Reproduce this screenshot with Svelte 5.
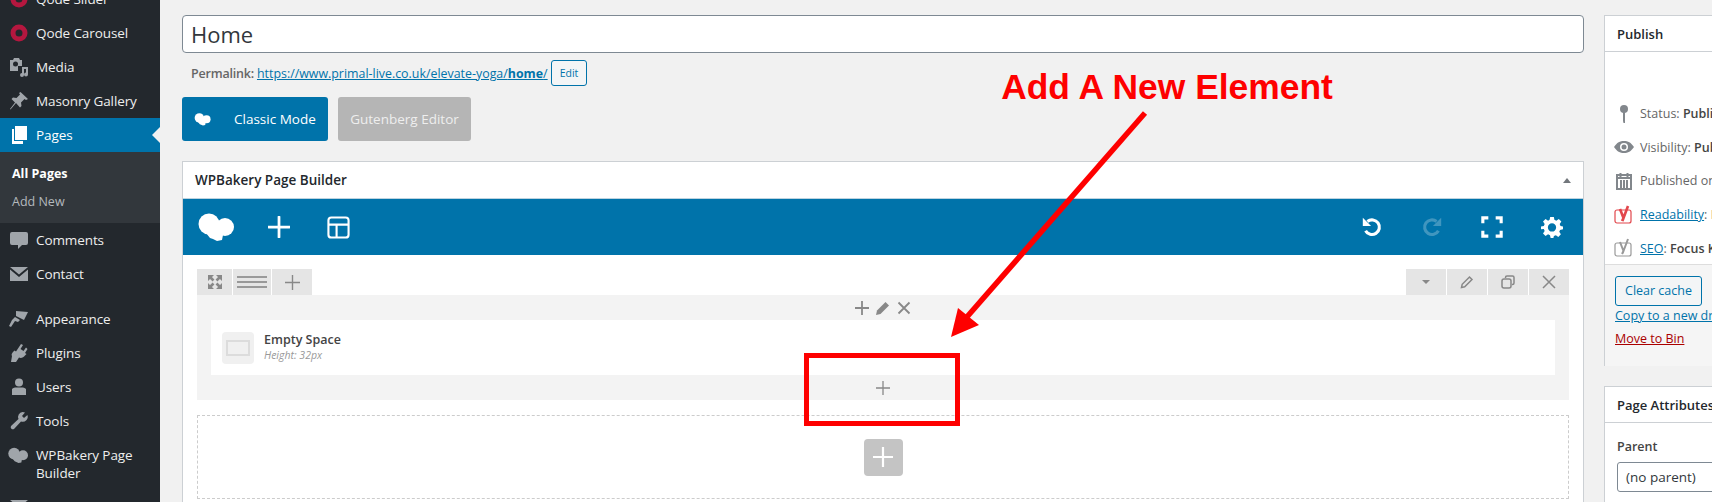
<script>
  const menuA = [
    { label: 'Qode Slider', icon: 'qode' },
    { label: 'Qode Carousel', icon: 'qode' },
    { label: 'Media', icon: 'media' },
    { label: 'Masonry Gallery', icon: 'pin' }
  ];
  const menuB = [
    { label: 'Comments', icon: 'comment' },
    { label: 'Contact', icon: 'mail', gap: true },
    { label: 'Appearance', icon: 'brush' },
    { label: 'Plugins', icon: 'plug' },
    { label: 'Users', icon: 'user' },
    { label: 'Tools', icon: 'wrench' },
    { label: 'WPBakery Page Builder', icon: 'cloud' },
    { label: '', icon: 'mail' }
  ];
</script>

{#snippet cloud(cls)}
  <svg class={cls} viewBox="0 0 36 29" fill="currentColor"><circle cx="11" cy="11" r="10.500"/><circle cx="27" cy="14" r="9"/><path d="M9 10h18v10l-2 2-1 5-5 1-4-2-3-1-4-5z"/></svg>
{/snippet}

{#snippet menuIcon(name)}
  {#if name === 'qode'}
    <svg class="mi" viewBox="0 0 20 20"><circle cx="10" cy="10" r="6" fill="none" stroke="#b5173f" stroke-width="5"/></svg>
  {:else if name === 'media'}
    <svg class="mi" viewBox="0 0 20 20" fill="#a0a5aa"><path d="M1 3h3l1-2h5l1 2h2v6H9v5H1z"/><circle cx="6.500" cy="7" r="2.500" fill="#23282d"/><path d="M13 10h6v7.500a2 2 0 1 1-2-2V12h-2v6a2 2 0 1 1-2-2z"/></svg>
  {:else if name === 'pin'}
    <svg class="mi" viewBox="0 0 20 20" fill="#a0a5aa"><path d="M11.500 1l7.500 7-2 1-1.500-1-3.500 3.500.5 3.500-1.500 1.500L7 12l-5.500 6.500-.5-.5L6 11.500 2.500 8 4 6.500l3.500.5L11 3.500 10 2z"/></svg>
  {:else if name === 'pages'}
    <svg class="mi" viewBox="0 0 20 20" fill="#fff"><path d="M6 1h12v14H6z"/><path d="M3 4h2v12h9v3H3z"/></svg>
  {:else if name === 'comment'}
    <svg class="mi" viewBox="0 0 20 20" fill="#a0a5aa"><path d="M3 2h14a2 2 0 0 1 2 2v9a2 2 0 0 1-2 2h-4l-4 4v-4H3a2 2 0 0 1-2-2V4a2 2 0 0 1 2-2z"/></svg>
  {:else if name === 'mail'}
    <svg class="mi" viewBox="0 0 20 20" fill="#a0a5aa"><path d="M1 3h18L10 10.500z"/><path d="M1 5.500V17h18V5.500L10 13z"/></svg>
  {:else if name === 'brush'}
    <svg class="mi" viewBox="0 0 20 20" fill="#a0a5aa"><path d="M7 2l12 1-4 8-8-4z"/><path d="M6 8l5 3-2 2-3-1-4 6-2-1 3-6z"/></svg>
  {:else if name === 'plug'}
    <svg class="mi" viewBox="0 0 20 20" fill="#a0a5aa"><path d="M12 1l2 1-2.500 4 3 2L17 4.500l1.500 1.500-2.500 4 1.500 1-1.500 1.500c-1.500 2-4 3-6 2L7 19H2l1-6c-1-1 0-3 1-4l1.500-1.500 1.500 1z"/></svg>
  {:else if name === 'user'}
    <svg class="mi" viewBox="0 0 20 20" fill="#a0a5aa"><circle cx="10" cy="5.500" r="4"/><path d="M3 12c2-2 4-1.500 7-1.500s5-.5 7 1.500v6H3z"/></svg>
  {:else if name === 'wrench'}
    <svg class="mi" viewBox="0 0 20 20" fill="#a0a5aa"><path d="M13.500 1a5 5 0 0 1 2.500.6L13 5l2 2 3.400-3a5 5 0 0 1-6.400 6.500L5 18a2.200 2.200 0 0 1-3-3l7.500-7a5 5 0 0 1 4-7z"/></svg>
  {:else if name === 'cloud'}
    <span class="mi cloudwrap">{@render cloud('cloud-mi')}</span>
  {/if}
{/snippet}

<div class="page">
  <nav class="sidebar">
    <ul class="menu top">
      {#each menuA as m}
        <li class="item">{@render menuIcon(m.icon)}<span class="label">{m.label}</span></li>
      {/each}
      <li class="item current">{@render menuIcon('pages')}<span class="label">Pages</span><i class="notch"></i></li>
    </ul>
    <ul class="sub">
      <li class="strong">All Pages</li>
      <li>Add New</li>
    </ul>
    <ul class="menu">
      {#each menuB as m}
        <li class="item" class:gap={m.gap} class:tall={m.icon === 'cloud'}>{@render menuIcon(m.icon)}<span class="label">{m.label}</span></li>
      {/each}
    </ul>
  </nav>

  <main class="main">
    <section class="editor">
      <div class="title">Home</div>
      <div class="permalink">
        <b>Permalink:</b>
        <a href="#top">https://www.primal-live.co.uk/elevate-yoga/<b>home</b>/</a>
        <span class="edit">Edit</span>
      </div>
      <div class="modes">
        <div class="mode classic">{@render cloud('cloud-small')}<span>Classic Mode</span></div>
        <div class="mode gutenberg">Gutenberg Editor</div>
      </div>

      <div class="box builder">
        <header class="builder-head">
          <h2>WPBakery Page Builder</h2>
          <i class="caret"></i>
        </header>
        <div class="toolbar">
          <div class="tools-left">
            {@render cloud('cloud-logo')}
            <svg class="plus-big" viewBox="0 0 24 24"><path d="M12 1v22M1 12h22" stroke="#fff" stroke-width="3" stroke-linecap="round"/></svg>
            <svg class="layout" viewBox="0 0 24 24" fill="none" stroke="#fff" stroke-width="2.200"><rect x="1.500" y="1.500" width="21" height="21" rx="3"/><path d="M1.500 9h21M10 9v13.500"/></svg>
          </div>
          <div class="tools-right">
            <svg class="ti" viewBox="0 0 24 24" fill="none" stroke="#fff" stroke-width="3.400"><path d="M7 6A8 8 0 1 1 5 16"/><path d="M2 2l9 9H2z" fill="#fff" stroke="none"/></svg>
            <svg class="ti dim" viewBox="0 0 24 24" fill="none" stroke="#fff" stroke-width="3.400"><path d="M17 6A8 8 0 1 0 19 16"/><path d="M22 2l-9 9h9z" fill="#fff" stroke="none"/></svg>
            <svg class="ti" viewBox="0 0 24 24" fill="none" stroke="#fff" stroke-width="3.400"><path d="M2 8V2h6M16 2h6v6M22 16v6h-6M8 22H2v-6"/></svg>
            <svg class="ti" viewBox="0 0 24 24" fill="#fff"><path fill-rule="evenodd" d="M10 1h4l.6 3.200 2.100.9L19.400 3.300l2.800 2.800-1.800 2.700.9 2.100L24 11.500v3l-3.200.7-.9 2.100 1.800 2.700-2.800 2.800-2.700-1.800-2.100.9L13.500 24h-3l-.7-3.100-2.100-.9-2.700 1.800-2.800-2.800 1.800-2.700-.9-2.100L0 14.500v-3l3.100-.6.900-2.100-1.800-2.700L5 3.300l2.700 1.800 1.700-.9zM12 8a4.500 4.500 0 1 0 0 9 4.500 4.500 0 0 0 0-9z"/></svg>
          </div>
        </div>

        <div class="canvas">
          <div class="row-tabs">
            <div class="tabs">
              <span class="tab t1"><svg class="tab-ico large" viewBox="0 0 14 14" fill="none" stroke="#888" stroke-width="2.600"><path d="M1 1l4.500 4.500M13 1L8.500 5.500M1 13l4.500-4.500M13 13L8.500 8.500"/><path d="M0 0h6L0 6zM14 0H8l6 6zM0 14h6l-6-6zM14 14H8l6-6z" fill="#888" stroke="none"/></svg></span>
              <span class="tab t2"><i class="bars"></i></span>
              <span class="tab t3"><svg class="tab-ico big" viewBox="0 0 14 14"><path d="M7 0v14M0 7h14" stroke="#888" stroke-width="1.300"/></svg></span>
            </div>
            <div class="tabs">
              <span class="tab r"><i class="down"></i></span>
              <span class="tab r"><svg class="tab-ico large" viewBox="0 0 14 14" fill="none" stroke="#888" stroke-width="1.500"><path d="M1.500 12.500l.7-3.200L9.500 2l2.500 2.500-7.300 7.300z"/></svg></span>
              <span class="tab r"><svg class="tab-ico large" viewBox="0 0 14 14" fill="none" stroke="#888" stroke-width="1.500"><rect x="1" y="4" width="9" height="9" rx="2"/><path d="M4.500 3V2.500A1.500 1.500 0 0 1 6 1h5.500A1.500 1.500 0 0 1 13 2.500V8a1.500 1.500 0 0 1-1.500 1.500H11"/></svg></span>
              <span class="tab r"><svg class="tab-ico large" viewBox="0 0 14 14"><path d="M1 1l12 12M13 1L1 13" stroke="#888" stroke-width="1.500"/></svg></span>
            </div>
          </div>
          <div class="row-body">
            <div class="col-controls">
              <svg class="cc" viewBox="0 0 14 14"><path d="M7 0v14M0 7h14" stroke="#888" stroke-width="1.800"/></svg>
              <svg class="cc" viewBox="0 0 14 14" fill="#888"><path d="M0 14l1-4.500L9.500 1l3.500 3.500L4.500 13z"/></svg>
              <svg class="cc" viewBox="0 0 14 14"><path d="M1.500 1.500l11 11M12.500 1.500l-11 11" stroke="#888" stroke-width="1.800"/></svg>
            </div>
            <div class="card">
              <div class="card-ico"><i></i></div>
              <div class="card-text">
                <div class="card-title">Empty Space</div>
                <div class="card-sub">Height: 32px</div>
              </div>
            </div>
            <div class="col-add">
              <svg class="cc" viewBox="0 0 14 14"><path d="M7 0v14M0 7h14" stroke="#888" stroke-width="1.300"/></svg>
            </div>
          </div>
          <div class="dropzone">
            <div class="addbtn"><svg viewBox="0 0 20 20"><path d="M10 0v20M0 10h20" stroke="#fff" stroke-width="2.200"/></svg></div>
          </div>
        </div>
      </div>
    </section>

    <aside class="side">
      <div class="box publish">
        <h2 class="side-head">Publish</h2>
        <div class="pub-rows">
          <div class="pub-row"><svg class="pi" viewBox="0 0 20 20" fill="#82878c"><circle cx="10" cy="5" r="4"/><path d="M9 8h2v11H9.500L9 17z"/></svg><span>Status: <b>Published</b></span></div>
          <div class="pub-row"><svg class="pi" viewBox="0 0 20 20" fill="#82878c"><path fill-rule="evenodd" d="M0 10c3-4.500 6-6 10-6s7 1.500 10 6c-3 4.500-6 6-10 6s-7-1.500-10-6zm10-4a4 4 0 1 0 0 8 4 4 0 0 0 0-8z"/><circle cx="10" cy="10" r="2.500"/></svg><span>Visibility: <b>Public</b></span></div>
          <div class="pub-row"><svg class="pi" viewBox="0 0 20 20" fill="none" stroke="#82878c" stroke-width="2"><rect x="3" y="4" width="14" height="14"/><path d="M3 7h14M6.500 2v5M13.500 2v5M7 9v8M10 9v8M13 9v8" /></svg><span>Published on: <b>Jan</b></span></div>
          <div class="pub-row"><svg class="pi" viewBox="0 0 20 20" fill="none" stroke="#e2474c" stroke-width="1.200"><rect x="1" y="5" width="16" height="13" rx="2"/><path d="M6 4l3.500 9L14 1M8 16l1.500-3" stroke-width="2.600"/></svg><span><a href="#top">Readability</a>: <b>Needs</b></span></div>
          <div class="pub-row"><svg class="pi" viewBox="0 0 20 20" fill="none" stroke="#999" stroke-width="1.200"><rect x="1" y="5" width="16" height="13" rx="2"/><path d="M6 4l3.500 9L14 1M8 16l1.500-3" stroke-width="2"/></svg><span><a href="#top">SEO</a>: <b>Focus Keyphrase</b></span></div>
        </div>
        <div class="pub-actions">
          <span class="clear">Clear cache</span>
          <a class="copy" href="#top">Copy to a new draft</a>
          <a class="trash" href="#top">Move to Bin</a>
        </div>
      </div>
      <div class="box attrs">
        <h2 class="side-head">Page Attributes</h2>
        <div class="attrs-body">
          <div class="parent">Parent</div>
          <div class="select">(no parent)</div>
        </div>
      </div>
    </aside>
  </main>

  <div class="annotation">
    <div class="note">Add A New Element</div>
    <div class="redbox"></div>
    <svg class="arrow" width="1712" height="502" viewBox="0 0 1712 502"><path d="M1145 113L966 318" stroke="#fe0000" stroke-width="5.500" fill="none"/><path d="M951 337l7-29 21 17z" fill="#fe0000"/></svg>
  </div>
</div>

<style>
  :global(body) { margin: 0; }
  * { box-sizing: border-box; }
  ul { list-style: none; margin: 0; padding: 0; }
  h2 { margin: 0; font-size: inherit; }
  a { color: #0073aa; }

  .page {
    position: relative;
    display: flex;
    width: 1712px;
    height: 502px;
    overflow: hidden;
    background: #f1f1f1;
    font-family: "Open Sans", "Noto Sans", sans-serif;
    color: #444;
    font-size: 13px;
  }

  .sidebar {
    flex: none;
    width: 160px;
    background: #23282d;
    color: #eee;
  }
  .menu.top { margin-top: -18px; }
  .item {
    position: relative;
    display: flex;
    align-items: center;
    height: 34px;
    font-size: 13.500px;
    letter-spacing: -0.100px;
  }
  .item.gap { margin-bottom: 11px; }
  .item.tall { height: 52px; line-height: 18px; }
  .tall .label { width: 112px; }
  .current { background: #0073aa; color: #fff; }
  .mi {
    flex: none;
    width: 20px;
    height: 20px;
    margin: 0 7px 0 9px;
  }
  .cloudwrap { color: #a0a5aa; display: flex; align-items: center; margin-left: 8px; margin-right: 8px; align-self: flex-start; margin-top: 7px; }
  .cloud-mi { width: 21px; height: 17px; }
  .notch {
    position: absolute;
    right: 0;
    top: 50%;
    margin-top: -8px;
    border: 8px solid transparent;
    border-right-color: #f1f1f1;
    border-left-width: 0;
  }
  .sub {
    height: 71px;
    padding-top: 8px;
    background: #32373c;
    color: #b4b9be;
    font-size: 12.500px;
  }
  .sub li { height: 28px; line-height: 28px; padding-left: 12px; }
  .strong { color: #fff; font-weight: 700; }

  .main {
    flex: 1;
    display: flex;
    gap: 20px;
    min-width: 0;
    padding: 15px 0 0 22px;
  }
  .editor { flex: none; width: 1402px; }
  .title {
    height: 38px;
    padding: 0 8px;
    line-height: 36px;
    font-size: 22px;
    color: #32373c;
    background: #fff;
    border: 1px solid #7e8993;
    border-radius: 4px;
  }
  .permalink {
    display: flex;
    align-items: center;
    gap: 3px;
    height: 28px;
    margin-top: 6px;
    padding-left: 9px;
    font-size: 12.500px;
    color: #666;
    white-space: pre;
  }
  .permalink > b { font-weight: 600; letter-spacing: -0.200px; }
  .permalink a { font-size: 12.400px; }
  .permalink a b { color: #0073aa; }
  .edit {
    height: 26px;
    padding: 0 8px;
    line-height: 24px;
    font-size: 10.500px;
    color: #0073aa;
    border: 1px solid #0073aa;
    border-radius: 3px;
    background: #f3f5f6;
  }
  .modes { display: flex; gap: 10px; margin-top: 10px; }
  .mode {
    height: 44px;
    line-height: 44px;
    border-radius: 3px;
    font-size: 13.500px;
    color: #fff;
  }
  .classic {
    display: flex;
    align-items: center;
    width: 146px;
    padding-left: 12px;
    background: #0073aa;
  }
  .cloud-small { width: 17px; height: 13px; margin-right: 23px; color: #fff; }
  .gutenberg {
    width: 133px;
    text-align: center;
    background: #b5b5b5;
    color: #eee;
  }

  .box { background: #fff; border: 1px solid #ccd0d4; }
  .builder { margin-top: 20px; height: 360px; }
  .builder-head {
    position: relative;
    display: flex;
    align-items: center;
    height: 36px;
    padding-left: 12px;
    font-size: 13.500px;
    color: #23282d;
  }
  .builder-head h2 { font-weight: 600; }
  .caret {
    position: absolute;
    right: 12px;
    top: 16px;
    border: 4.500px solid transparent;
    border-top-width: 0;
    border-bottom: 5px solid #72777c;
  }
  .toolbar {
    display: flex;
    justify-content: space-between;
    align-items: center;
    height: 57px;
    background: #0073aa;
    border-top: 1px solid #bcd3e0;
  }
  .tools-left { display: flex; align-items: center; padding-left: 15px; color: #fff; }
  .cloud-logo { width: 36px; height: 29px; margin-right: 34px; }
  .plus-big { width: 22px; height: 22px; margin-right: 37px; }
  .layout { width: 23px; height: 23px; }
  .tools-right { display: flex; align-items: center; gap: 38px; padding-right: 20px; }
  .ti { width: 22px; height: 22px; }
  .dim { opacity: 0.25; }

  .canvas { padding: 14px 14px 0; }
  .row-tabs { display: flex; justify-content: space-between; }
  .tabs { display: flex; gap: 1px; }
  .tab {
    display: flex;
    align-items: center;
    justify-content: center;
    height: 26px;
    background: #e5e5e5;
  }
  .t1 { width: 35px; }
  .t2 { width: 38px; }
  .t3 { width: 40px; }
  .r { width: 40px; }
  .tab-ico { width: 13px; height: 13px; }
  .tab-ico.large { width: 14px; height: 14px; }
  .tab-ico.big { width: 15px; height: 15px; }
  .bars {
    width: 30px;
    height: 12px;
    border-top: 2px solid #999;
    border-bottom: 2px solid #999;
    background: linear-gradient(#999, #999) center / 100% 2px no-repeat;
  }
  .down {
    border: 4px solid transparent;
    border-bottom-width: 0;
    border-top: 4px solid #888;
  }
  .row-body { height: 105px; background: #f3f3f3; }
  .col-controls {
    display: flex;
    justify-content: center;
    align-items: center;
    gap: 7px;
    height: 25px;
  }
  .cc { width: 14px; height: 14px; }
  .card {
    display: flex;
    align-items: center;
    gap: 10px;
    height: 55px;
    margin: 0 14px;
    padding-left: 11px;
    background: #fff;
  }
  .card-ico {
    display: flex;
    align-items: center;
    justify-content: center;
    width: 32px;
    height: 32px;
    border-radius: 4px;
    background: #f0f0f0;
  }
  .card-ico i {
    width: 24px;
    height: 16px;
    border: 2px solid #dcdcdc;
  }
  .card-text { padding-bottom: 2px; }
  .card-title { font-size: 12.500px; font-weight: 600; line-height: 16px; color: #444; }
  .card-sub { font-size: 10.500px; font-style: italic; line-height: 14px; color: #999; }
  .col-add {
    display: flex;
    align-items: center;
    justify-content: center;
    height: 25px;
  }
  .dropzone {
    display: flex;
    justify-content: center;
    align-items: center;
    height: 84px;
    margin-top: 15px;
    border: 1px dashed #ccc;
  }
  .addbtn {
    display: flex;
    align-items: center;
    justify-content: center;
    width: 39px;
    height: 37px;
    border-radius: 4px;
    background: #c4c4c4;
  }
  .addbtn svg { width: 20px; height: 20px; }

  .side { flex: none; width: 300px; }
  .side-head {
    display: flex;
    align-items: center;
    height: 36px;
    padding: 1px 0 0 12px;
    font-size: 13px;
    font-weight: 600;
    color: #23282d;
    border-bottom: 1px solid #ccd0d4;
  }
  .publish { height: 351px; }
  .pub-rows { padding-top: 45px; height: 212px; }
  .pub-row {
    display: flex;
    align-items: center;
    height: 33.600px;
    padding-left: 9px;
    font-size: 12.500px;
    white-space: nowrap;
    color: #666;
    gap: 6px;
  }
  .pub-row b { color: #444; font-weight: 600; }
  .pi { width: 20px; height: 20px; flex: none; }
  .pub-actions {
    height: 102px;
    padding: 11px 0 0 10px;
    background: #f5f5f5;
    border-top: 1px solid #ddd;
    font-size: 12.500px;
  }
  .clear {
    display: block;
    width: 87px;
    height: 30px;
    line-height: 28px;
    text-align: center;
    color: #0073aa;
    border: 1px solid #0073aa;
    border-radius: 3px;
    background: #f3f5f6;
  }
  .copy, .trash { display: block; line-height: 17px; }
  .copy { margin-top: 1px; }
  .trash { margin-top: 6px; color: #a00; }
  .attrs { margin-top: 20px; height: 200px; }
  .attrs-body { padding: 15px 0 0 12px; }
  .parent { font-size: 12.500px; font-weight: 600; line-height: 18px; color: #444; }
  .select {
    width: 280px;
    height: 30px;
    margin-top: 6px;
    padding-left: 8px;
    line-height: 28px;
    font-size: 13.500px;
    color: #32373c;
    border: 1px solid #7e8993;
    border-radius: 3px;
  }

  .annotation { position: absolute; inset: 0; pointer-events: none; }
  .note {
    position: absolute;
    left: 967px;
    top: 65px;
    width: 400px;
    text-align: center;
    font: 700 35.400px/44px "Liberation Sans", Arial, sans-serif;
    color: #fe0000;
  }
  .redbox {
    position: absolute;
    left: 804px;
    top: 353px;
    width: 156px;
    height: 73px;
    border: 5px solid #fe0000;
  }
  .arrow { position: absolute; left: 0; top: 0; }
</style>
